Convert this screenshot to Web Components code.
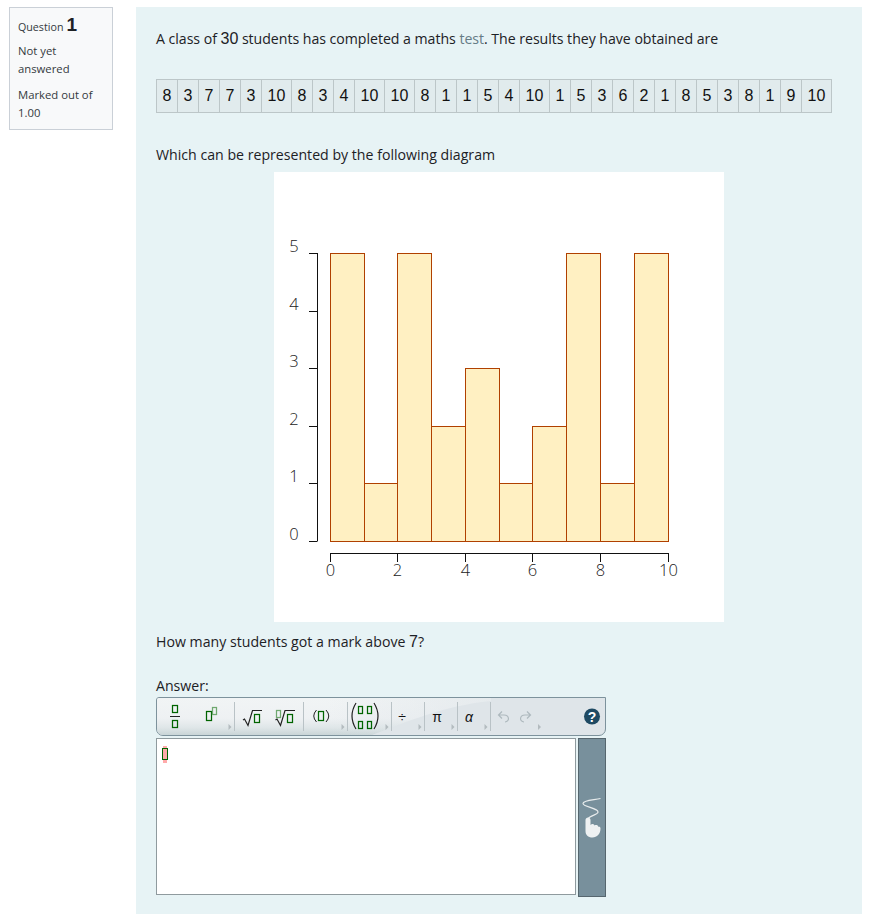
<!DOCTYPE html>
<html lang="en">
<head>
<meta charset="utf-8">
<title>Question 1</title>
<style>
  html, body { margin: 0; background: #fff; }
  body { font-family: "Open Sans", sans-serif; color: #1d2125; }
</style>
</head>
<body>
<quiz-page>
  <question-info slot="info" number="1"></question-info>
  <question-body slot="body">
    <p-line style="padding-top:1px;height:29px;letter-spacing:-0.035px">A class of <math-num>30</math-num> students has completed a maths <a-link>test</a-link>. The results they have obtained are</p-line>
    <data-table values="8 3 7 7 3 10 8 3 4 10 10 8 1 1 5 4 10 1 5 3 6 2 1 8 5 3 8 1 9 10"></data-table>
    <p-line style="margin-top:27px">Which can be represented by the following diagram</p-line>
    <bar-chart values="5 1 5 2 3 1 2 5 1 5"></bar-chart>
    <p-line style="margin-top:4px;padding-top:1px;height:29px">How many students got a mark above <math-num>7</math-num>?</p-line>
    <p-line style="margin-top:17px;padding-top:1px;height:23px;line-height:24px">Answer:</p-line>
    <math-editor></math-editor>
  </question-body>
</quiz-page>

<script>
class QuizPage extends HTMLElement {
  constructor () {
    super()
    this.attachShadow({ mode: 'open' }).innerHTML = `
      <style>
        :host { display: flex; align-items: flex-start; padding: 7px 0 9px 9px; }
        .side { width: 104px; flex: none; }
        .main { margin-left: 23px; flex: none; }
      </style>
      <div class="side"><slot name="info"></slot></div>
      <div class="main"><slot name="body"></slot></div>
    `
  }
}

class QuestionInfo extends HTMLElement {
  constructor () {
    super()
    this.attachShadow({ mode: 'open' }).innerHTML = `
      <style>
        :host { display: block; box-sizing: border-box; height: 123px; padding: 7px 8px; background: #f8f9fa; border: 1px solid #cad0d7; font-size: 11.3px; line-height: 18px; color: #343a40; }
        .q { height: 20px; display: flex; align-items: baseline; gap: 3px; font-size: 10.7px; }
        .q b { font: 700 19px/20px "Liberation Sans", sans-serif; color: #1d2125; }
        div.s { margin-top: 7px; }
        div.m { margin-top: 8px; }
      </style>
      <div class="q">Question <b>${this.getAttribute('number')}</b></div>
      <div class="s">Not yet answered</div>
      <div class="m">Marked out of 1.00</div>
    `
  }
}

class QuestionBody extends HTMLElement {
  constructor () {
    super()
    this.attachShadow({ mode: 'open' }).innerHTML = `
      <style>
        :host { display: flow-root; box-sizing: border-box; width: 726px; height: 907px; padding: 16px 20px 0; background: #e7f3f5; font-size: 14.15px; }
      </style>
      <slot></slot>
    `
  }
}

class PLine extends HTMLElement {
  constructor () {
    super()
    this.attachShadow({ mode: 'open' }).innerHTML = `<style>
        :host { display: block; height: 30px; line-height: 30px; white-space: nowrap; color: #1d2125; }
      </style><slot></slot>`
  }
}

class MathNum extends HTMLElement {
  constructor () {
    super()
    this.attachShadow({ mode: 'open' }).innerHTML = `<style>
        :host { display: inline; font-family: "Liberation Sans", sans-serif; font-size: 16px; }
      </style><slot></slot>`
  }
}

class ALink extends HTMLElement {
  constructor () {
    super()
    this.attachShadow({ mode: 'open' }).innerHTML = `<style>
        :host { display: inline; color: #667c86; }
      </style><slot></slot>`
  }
}

class DataTable extends HTMLElement {
  constructor () {
    super()
    const cells = this.getAttribute('values').split(' ')
      .map(v => `<span class="${v.length > 1 ? 'w' : ''}">${v}</span>`).join('')
    this.attachShadow({ mode: 'open' }).innerHTML = `
      <style>
        :host { display: flex; width: 676px; height: 34px; margin-top: 26px; box-sizing: border-box; background: #e1ebed; border: 1px solid #bcc6c8; font: 16px "Liberation Sans", sans-serif; color: #111; }
        span { width: 21px; flex: none; box-sizing: border-box; border-right: 1px solid #bcc6c8; display: flex; align-items: center; justify-content: center; }
        span.w { width: 30px; }
        span:last-child { border-right: none; width: 29px; }
      </style>
      ${cells}
    `
  }
}

class BarChart extends HTMLElement {
  constructor () {
    super()
    const vals = this.getAttribute('values').split(' ').map(Number)
    // bar edges as they land on the pixel grid
    const edges = [56.5, 90.5, 123.5, 157.5, 191.5, 225.5, 258.5, 292.5, 326.5, 360.5, 394.5]
    const base = 369
    const uy = 57.6
    const bars = vals.map((v, i) => {
      const t = Math.round(base - v * uy) + 0.5
      return `<rect x="${edges[i]}" y="${t}" width="${edges[i + 1] - edges[i]}" height="${base + 0.5 - t}"/>`
    }).join('')
    let ticks = ''
    let labels = ''
    for (let i = 0; i <= 5; i++) {
      const y = Math.round(base - i * uy)
      ticks += `<path d="M35 ${y + 0.5}H43"/>`
      labels += `<text x="20" y="${y - 6.5}" dy="0.36em" text-anchor="middle">${i}</text>`
    }
    for (let i = 0; i <= 10; i += 2) {
      const x = edges[i]
      ticks += `<path d="M${x} 381V390"/>`
      labels += `<text x="${x}" y="398" dy="0.36em" text-anchor="middle">${i}</text>`
    }
    this.attachShadow({ mode: 'open' }).innerHTML = `
      <style>
        :host { display: block; width: 450px; height: 450px; margin: 2px auto 0; background: #fff; }
        svg { display: block; }
        .bars rect { fill: #fff0c2; stroke: #b04000; stroke-width: 1; }
        .axes path { fill: none; stroke: #111; stroke-width: 1; }
        text { font: 300 16.5px "Open Sans", sans-serif; fill: #222; }
      </style>
      <svg width="450" height="450" viewBox="0 0 450 450">
        <g class="bars">${bars}</g>
        <g class="axes">
          <path d="M43.5 81V369.5"/>
          <path d="M56.5 381.5H394.5"/>
          ${ticks}
        </g>
        ${labels}
      </svg>
    `
  }
}

class ToolGroup extends HTMLElement {
  constructor () {
    super()
    this.attachShadow({ mode: 'open' }).innerHTML = `
      <style>
        :host { display: block; flex: none; height: 37px; position: relative; }
        :host([sep])::after { content: ""; position: absolute; right: 0; top: 4px; height: 29px; width: 1px; background: #b9c2c6; }
        ::slotted(svg) { display: block; }
      </style>
      <slot></slot>
    `
  }
}

class MathToolbar extends HTMLElement {
  constructor () {
    super()
    this.attachShadow({ mode: 'open' }).innerHTML = `
      <style>
        :host { display: block; position: relative; box-sizing: border-box; height: 39px; width: 450px; border: 1px solid #7d929c; border-radius: 3px 0 7px 7px; background: #dfe5e9; overflow: hidden; }
        .gloss { position: absolute; left: 0; top: 0; width: 334px; height: 37px; }
        .row { position: relative; display: flex; }
      </style>
      <svg class="gloss" viewBox="0 0 334 37">
        <defs>
          <linearGradient id="g" x1="0" y1="0" x2="0" y2="1">
            <stop offset="0" stop-color="#f1f4f5"/>
            <stop offset="0.55" stop-color="#eef1f3"/>
            <stop offset="0.8" stop-color="#dfe6e8"/>
            <stop offset="1" stop-color="#c9d5d7"/>
          </linearGradient>
          <linearGradient id="f" x1="0" y1="0" x2="1" y2="0">
            <stop offset="0" stop-color="#dfe5e9" stop-opacity="0"/>
            <stop offset="1" stop-color="#dfe5e9" stop-opacity="0.6"/>
          </linearGradient>
        </defs>
        <rect width="334" height="37" fill="url(#g)"/>
        <rect x="170" width="164" height="37" fill="url(#f)"/>
        <path d="M334 3C285 8 250 24 215 37H334Z" fill="#dfe5e9"/>
      </svg>
      <div class="row"><slot></slot></div>
    `
  }
}

class MathEditor extends HTMLElement {
  constructor () {
    super()
    const g = '#006400'
    const l = '#6fa86f'
    const k = '#222'
    const box = (x, y, w, h, c = g) => `<rect x="${x + 0.5}" y="${y + 0.5}" width="${w}" height="${h}" fill="none" stroke="${c}" stroke-width="1.25"/>`
    // one toolbar cell, the svg uses page coordinates through its viewBox
    const cell = (from, to, sep, arrow, icons) => `
      <tool-group ${sep ? 'sep' : ''} style="width:${to - from}px">
        <svg width="${to - from}" height="37" viewBox="${from} 698 ${to - from} 37" fill="none">
          ${icons}
          ${arrow ? `<path d="M${to - 6.5} 724l3 3-3 3z" fill="#b3bbbf"/>` : ''}
        </svg>
      </tool-group>`
    this.attachShadow({ mode: 'open' }).innerHTML = `
      <style>
        :host { display: block; width: 450px; }
        .work { display: flex; gap: 2px; margin-top: 2px; }
        .area { position: relative; box-sizing: border-box; width: 420px; height: 157px; background: #fff; border: 1px solid #8f9a9e; }
        .cursor { position: absolute; left: 6px; top: 7px; width: 4px; height: 17px; background: #ffaaaa; }
        .caret { position: absolute; left: 5px; top: 9px; width: 6px; height: 12px; box-sizing: border-box; border: 1px solid #006400; }
        .side { box-sizing: border-box; width: 28px; height: 159px; background: #78909c; border: 1px solid #56666e; }
        .side svg { display: block; }
        text { font-family: "Liberation Sans", sans-serif; fill: #111; }
      </style>
      <math-toolbar>
        ${cell(157, 235, true, true, `
          ${box(172, 705, 5, 7)}<path d="M170 716.5H180" stroke="${k}"/>${box(172, 720, 5, 7)}
          ${box(206, 711, 5, 9)}${box(212, 707, 4, 7, l)}`)}
        ${cell(235, 304, true, false, `
          <path d="M243 720l1.5-1 3.5 6.5L252.5 710.5H262" stroke="${k}" stroke-width="1.2"/>${box(254, 714, 5, 8)}
          ${box(276, 710, 4, 7, l)}<path d="M275.5 720l1.5-1 3.5 6.5L285 710.5H295" stroke="${k}" stroke-width="1.2"/>${box(287, 714, 5, 8)}`)}
        ${cell(304, 348, true, true, `
          <path d="M316.5 710q-5.5 6 0 12M326 710q5.5 6 0 12" stroke="${k}"/>${box(318, 711, 5, 9)}`)}
        ${cell(348, 392, true, true, `
          <path d="M356 703q-8 13 0 26M374 703q8 13 0 26" stroke="${k}" stroke-width="1.2"/>
          ${box(358, 706, 4, 7)}${box(367, 706, 4, 7)}${box(358, 721, 4, 7)}${box(367, 721, 4, 7)}`)}
        ${cell(392, 425, true, true, `<text x="402" y="722" font-size="14" text-anchor="middle">÷</text>`)}
        ${cell(425, 458, true, true, `<text x="437" y="722" font-size="14" text-anchor="middle">π</text>`)}
        ${cell(458, 491, true, true, `<text x="469" y="722" font-size="14" text-anchor="middle" font-style="italic">α</text>`)}
        ${cell(491, 605, false, false, `
          <path d="M498.5 715H504C509.5 715 510 721.5 505 722M502 711.5L498.5 715L502 718.5" stroke="#aeb9be" stroke-width="1.2"/>
          <path d="M530.5 715H525C519.5 715 519 721.5 524 722M527 711.5L530.5 715L527 718.5" stroke="#aeb9be" stroke-width="1.2"/>
          <path d="M538 724l3 3-3 3z" fill="#b3bbbf"/>
          <circle cx="592" cy="716.5" r="8" fill="#1f4a63"/>
          <text x="592" y="722" font-size="14" text-anchor="middle" font-weight="700" style="fill:#fff">?</text>`)}
      </math-toolbar>
      <div class="work">
        <div class="area"><div class="cursor"></div><div class="caret"></div></div>
        <div class="side">
          <svg width="26" height="157" viewBox="579 739 26 157" fill="none">
            <path d="M600.5 798.5C594 800 583 800 583 803.5C583 807 598 808 598 812C598 815 590 815 588 819" stroke="#e8eced" stroke-width="1.2"/>
            <path d="M585.5 820C585.5 816.5 590.5 816.5 590.5 820V825C592 823.5 594 824 594.5 825.5C596 824.5 598 825 598.5 827C599.5 826.5 600.5 827 600.5 828.5C600.5 834 597 837.5 592.5 837.5C588 837.5 585.5 835 585.5 831Z" fill="#eef1f2"/>
          </svg>
        </div>
      </div>
    `
  }
}

customElements.define('quiz-page', QuizPage)
customElements.define('question-info', QuestionInfo)
customElements.define('question-body', QuestionBody)
customElements.define('p-line', PLine)
customElements.define('math-num', MathNum)
customElements.define('a-link', ALink)
customElements.define('data-table', DataTable)
customElements.define('bar-chart', BarChart)
customElements.define('tool-group', ToolGroup)
customElements.define('math-toolbar', MathToolbar)
customElements.define('math-editor', MathEditor)
</script>
</body>
</html>
